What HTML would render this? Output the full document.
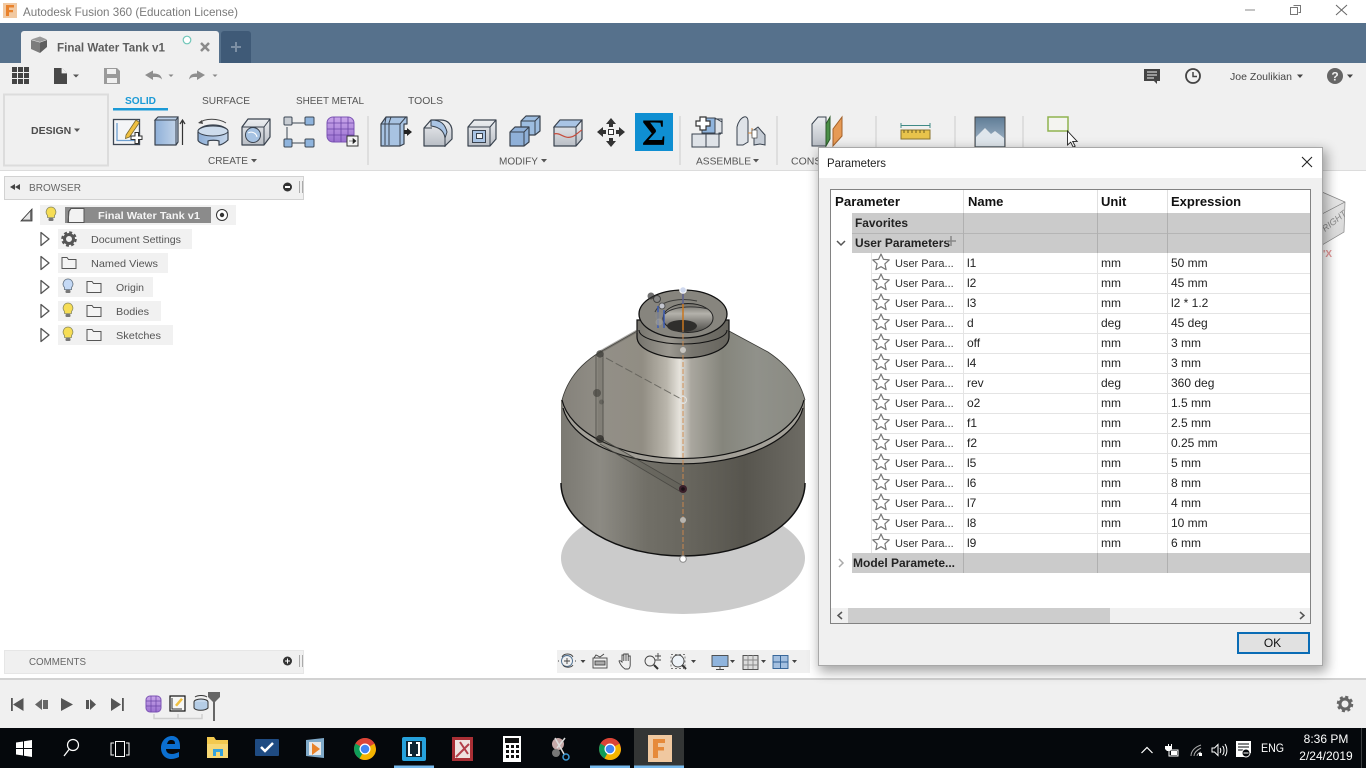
<!DOCTYPE html>
<html><head><meta charset="utf-8"><title>Autodesk Fusion 360</title>
<style>
html,body{margin:0;padding:0;background:#fff;overflow:hidden}
svg{display:block}
text{font-family:"Liberation Sans",Arial,sans-serif;white-space:pre}
.tb{font-size:10.5px;fill:#555}
.h{font-size:13px;font-weight:bold;fill:#111}
.g{font-size:11.5px;font-weight:bold;fill:#222}
.c{font-size:12px;fill:#222}
.u{font-size:11px;fill:#333}
</style></head><body>
<svg width="1366" height="768" viewBox="0 0 1366 768" xmlns="http://www.w3.org/2000/svg">
<defs>
<linearGradient id="bl" x1="0" y1="0" x2="1" y2="0"><stop offset="0" stop-color="#8fb0d8"/><stop offset="1" stop-color="#c5d6ea"/></linearGradient>
<linearGradient id="gy" x1="0" y1="0" x2="0" y2="1"><stop offset="0" stop-color="#eceef1"/><stop offset="1" stop-color="#b9bec5"/></linearGradient>
<linearGradient id="pu" x1="0" y1="0" x2="0" y2="1"><stop offset="0" stop-color="#c9a6ea"/><stop offset="1" stop-color="#9a70d0"/></linearGradient>
<linearGradient id="cone" x1="562" y1="0" x2="805" y2="0" gradientUnits="userSpaceOnUse">
<stop offset="0" stop-color="#85827b"/><stop offset=".18" stop-color="#928f87"/><stop offset=".33" stop-color="#918d83"/><stop offset=".43" stop-color="#b9b5ab"/><stop offset=".485" stop-color="#e6e3dc"/><stop offset=".53" stop-color="#aaa79f"/><stop offset=".66" stop-color="#85857c"/><stop offset=".8" stop-color="#90918a"/><stop offset="1" stop-color="#8a8a82"/></linearGradient>
<linearGradient id="cyl" x1="561" y1="0" x2="805" y2="0" gradientUnits="userSpaceOnUse">
<stop offset="0" stop-color="#7b7972"/><stop offset=".16" stop-color="#8c8a83"/><stop offset=".35" stop-color="#716f67"/><stop offset=".5" stop-color="#69675f"/><stop offset=".75" stop-color="#57554e"/><stop offset="1" stop-color="#6d6b64"/></linearGradient>
<linearGradient id="neck" x1="637" y1="0" x2="729" y2="0" gradientUnits="userSpaceOnUse">
<stop offset="0" stop-color="#75736c"/><stop offset=".35" stop-color="#9b9890"/><stop offset=".6" stop-color="#78766f"/><stop offset="1" stop-color="#66645d"/></linearGradient>
<linearGradient id="hole" x1="0" y1="0" x2="0" y2="1"><stop offset="0" stop-color="#6e6c66"/><stop offset=".35" stop-color="#b4b2ab"/><stop offset=".6" stop-color="#8a8883"/><stop offset="1" stop-color="#4d4c48"/></linearGradient>
<linearGradient id="cube" x1="0" y1="0" x2="1" y2="1"><stop offset="0" stop-color="#f0f0f0"/><stop offset="1" stop-color="#d4d4d4"/></linearGradient>
<linearGradient id="sky" x1="0" y1="0" x2="0" y2="1"><stop offset="0" stop-color="#5f7c96"/><stop offset="1" stop-color="#a9bccd"/></linearGradient>
<filter id="sh" x="-10%" y="-10%" width="120%" height="120%"><feGaussianBlur stdDeviation="6"/></filter>
<g id="star"><path d="M0-8 2.400-2.700 8.200-2.100 3.900 1.800 5.100 7.600 0 4.700-5.100 7.600-3.900 1.800-8.200-2.100-2.400-2.700Z" fill="#fff" stroke="#777" stroke-width="1.200" stroke-linejoin="round"/></g>
<g id="bulb"><path d="M0-7a5 5 0 0 1 3.500 8.400V3.500h-7V1.400A5 5 0 0 1 0-7Z" stroke="#8a8a60" stroke-width=".8" fill="#f6dd55"/><rect x="-2.500" y="4" width="5" height="3" rx="1" fill="#777"/></g>
<g id="folder"><path d="M-7-5.500h5l1.500 2H7V5.500H-7Z" fill="#f4f4f4" stroke="#555" stroke-width="1"/></g>
<path id="tri" d="M-4-6.500 4 0-4 6.500Z" fill="#fff" stroke="#555" stroke-width="1.300" stroke-linejoin="round"/>
</defs>

<!-- title bar -->
<rect width="1366" height="23" fill="#fff"/>
<rect x="3" y="3" width="14" height="15" fill="#f1c9a2"/>
<path d="M6 5h8v2.500H9v2.500h4v2.200H9V16H6Z" fill="#e9822c"/>
<text x="23" y="16" font-size="12" fill="#7a7a7a" textLength="215" lengthAdjust="spacingAndGlyphs">Autodesk Fusion 360 (Education License)</text>
<path d="M1245 10h10" stroke="#888"/>
<path d="M1293.500 5.500h7v7h-2M1290.500 7.500h7v7h-7Z" fill="#fff" stroke="#777"/>
<path d="M1336 5 1347 15M1347 5 1336 15" stroke="#666"/>

<!-- app bar -->
<rect y="23" width="1366" height="40" fill="#56718c"/>
<path d="M21 63V34a3 3 0 0 1 3-3H216a3 3 0 0 1 3 3V63Z" fill="#f0f0f0"/>
<path d="M221 63V34a3 3 0 0 1 3-3H248a3 3 0 0 1 3 3V63Z" fill="#3f5a77"/>
<path d="M31 40l9 2.500v10.500l-9-4Z" fill="#7c7c7c"/>
<path d="M40 42.500l7-2.500v7l-7 6Z" fill="#5e5e5e"/>
<path d="M31 39.500l9-3 7 3-7 2.500Z" fill="#9a9a9a"/>
<text x="57" y="51.500" font-size="12" font-weight="bold" fill="#5c5c5c" textLength="108" lengthAdjust="spacingAndGlyphs">Final Water Tank v1</text>
<circle cx="187" cy="40" r="3.800" fill="#fff" stroke="#6fc6b8" stroke-width="1.200"/>
<path d="M201 43 209 51M209 43 201 51" stroke="#8a8a8a" stroke-width="2.500"/>
<path d="M236 42v10M231 47h10" stroke="#7c8fa4" stroke-width="2"/>

<!-- toolbar -->
<rect y="63" width="1366" height="107" fill="#f0f0f0"/>
<rect y="170" width="1366" height="1" fill="#dcdcdc"/>
<g fill="#444"><rect x="12" y="67" width="5" height="5"/><rect x="18" y="67" width="5" height="5"/><rect x="24" y="67" width="5" height="5"/><rect x="12" y="73" width="5" height="5"/><rect x="18" y="73" width="5" height="5"/><rect x="24" y="73" width="5" height="5"/><rect x="12" y="79" width="5" height="5"/><rect x="18" y="79" width="5" height="5"/><rect x="24" y="79" width="5" height="5"/></g>
<path d="M54 68h8l5 5v11H54Z" fill="#484848"/><path d="M62 68v5h5" fill="#f0f0f0" stroke="#f0f0f0" stroke-width=".8"/>
<path d="M73 74.500h6l-3 3Z" fill="#555"/>
<path d="M104 68h13l3 3v13h-16Z" fill="#9a9a9a"/><rect x="107" y="69" width="9" height="5" fill="#f0f0f0"/><rect x="107" y="78" width="10" height="5" fill="#f0f0f0"/>
<path d="M153 70.500v3c5 0 8 1 9 6-3-3-5-2.500-9-2.500v3l-8-5Z" fill="#8e8e8e"/>
<path d="M168.500 74.500h5l-2.500 2.500Z" fill="#888"/>
<path d="M197 70.500v3c-5 0-7 1-8 6 3-3 4-2.500 8-2.500v3l8-5Z" fill="#8e8e8e"/>
<path d="M212.500 74.500h5l-2.500 2.500Z" fill="#888"/>

<rect x="4" y="94.500" width="104" height="71" fill="#f0f0f0" stroke="#dcdcdc" stroke-width="2"/>
<text x="31" y="134" font-size="10.500" font-weight="bold" fill="#4c4c4c">DESIGN</text>
<path d="M74 128.500h6l-3 3.500Z" fill="#555"/>
<text x="125" y="104" font-size="10.500" font-weight="bold" fill="#1b9ad6" textLength="31" lengthAdjust="spacingAndGlyphs">SOLID</text>
<rect x="113" y="108" width="55" height="2.500" fill="#1b9ad6"/>
<text x="202" y="104" class="tb" textLength="48" lengthAdjust="spacingAndGlyphs">SURFACE</text>
<text x="296" y="104" class="tb" textLength="68" lengthAdjust="spacingAndGlyphs">SHEET METAL</text>
<text x="408" y="104" class="tb" textLength="35" lengthAdjust="spacingAndGlyphs">TOOLS</text>
<g stroke="#dedede" stroke-width="2"><path d="M368 116V165M680 116V165M777 116V165M876 116V148M955 116V148M1023 116V148"/></g>
<text x="208" y="164" class="tb" textLength="40" lengthAdjust="spacingAndGlyphs">CREATE</text><path d="M251 159h6l-3 3.500Z" fill="#555"/>
<text x="499" y="164.500" class="tb" textLength="39" lengthAdjust="spacingAndGlyphs">MODIFY</text><path d="M541 159h6l-3 3.500Z" fill="#555"/>
<text x="696" y="164.500" class="tb" textLength="55" lengthAdjust="spacingAndGlyphs">ASSEMBLE</text><path d="M753 159h6l-3 3.500Z" fill="#555"/>
<text x="791" y="164.500" class="tb">CONSTRUCT</text>

<!-- sketch icon -->
<rect x="113.500" y="119.500" width="26" height="25" fill="#f4f5f7" stroke="#3d4754" stroke-width="1.300"/>
<path d="M117 123v17.500h20" stroke="#6d9fd1" fill="none" stroke-width="1.300"/>
<path d="M126 135 136 120l3.500 2.500-10 14.500-4 1.500Z" fill="#f0c040" stroke="#7a6a30" stroke-width=".8"/>
<path d="M131 136h4v-3.500h3.500v3.500h3.500v3.500h-3.500v4h-3.500v-4h-4Z" fill="#fff" stroke="#333"/>
<!-- extrude -->
<path d="M155 120l3-3h20v25l-2 3h-21Z" fill="url(#bl)" stroke="#39424e" stroke-width="1.200" stroke-linejoin="round"/>
<path d="M158 117l18 0 2 0-2 3H155Z" fill="#bcd0e8" stroke="#39424e"/>
<path d="M176 120v25" stroke="#39424e"/>
<path d="M182.500 145V121m-2.500 3 2.500-4 2.500 4" stroke="#333" fill="none" stroke-width="1.200"/>
<!-- revolve -->
<path d="M198 132c0-4 7-7 15-7s15 3 15 7v8c-3 3-7 5-9 5v-4c-2-1-9-1-11 0v4c-4 0-10-3-10-5Z" fill="url(#bl)" stroke="#39424e" stroke-width="1.200"/>
<ellipse cx="213" cy="131" rx="15" ry="5" fill="#cddcec" stroke="#39424e"/>
<path d="M199 123c6-5 19-5 27 0" stroke="#444" fill="none"/><path d="M202 120l-4 3 5 1" fill="#444"/>
<!-- hole -->
<path d="M242 127l6-8h22v18l-6 8h-22Z" fill="url(#gy)" stroke="#39424e" stroke-width="1.200" stroke-linejoin="round"/>
<path d="M242 127h22v18M264 127l6-8" stroke="#39424e" fill="none"/>
<circle cx="253" cy="135" r="7.500" fill="#a6c2e2" stroke="#39424e"/><path d="M248 133a6 6 0 0 1 9 4" fill="none" stroke="#fff"/>
<!-- pattern -->
<g stroke="#3d4754"><path d="M290 123h15M287 127v14M290 143h15" fill="none"/>
<rect x="284" y="117" width="8" height="8" rx="1" fill="#c8cdd3"/><rect x="305" y="117" width="9" height="8" rx="1" fill="#8fb4dd"/><rect x="284" y="139" width="8" height="8" rx="1" fill="#8fb4dd"/><rect x="305" y="139" width="9" height="8" rx="1" fill="#8fb4dd"/></g>
<!-- purple -->
<rect x="327" y="117" width="27" height="25" rx="6" fill="url(#pu)" stroke="#7d55b5"/>
<g stroke="#6a44a5" stroke-width=".8"><path d="M327 123h27M327 129h27M327 135h27M334 117v25M341 117v25M348 117v25"/></g>
<rect x="347" y="136" width="11" height="10" fill="#f4f4f4" stroke="#333"/><path d="M349 141h4v-2.500l3 2.500-3 2.500V141" fill="#222" stroke="#222" stroke-width=".6"/>
<!-- press pull -->
<path d="M381 124l5-7h21v7l-3 0v20l-4 2h-19Z" fill="#a8c3e2" stroke="#39424e" stroke-width="1.200" stroke-linejoin="round"/>
<path d="M386 117l-1 6v22M391 117l-2 6v22M400 124l6-7M400 124v22M381 124h19" stroke="#39424e" fill="none"/>
<path d="M404 130h3v-2l5 4-5 4v-2h-3Z" fill="#222"/>
<!-- fillet -->
<path d="M424 128l7-8h10c7 0 11 5 11 11v8l-7 7h-21Z" fill="url(#gy)" stroke="#39424e" stroke-width="1.200" stroke-linejoin="round"/>
<path d="M431 120c10 0 14 4 16 12l-2 6c-1-7-6-11-14-12Z" fill="#a9c4e4" stroke="#39424e"/><path d="M445 147v-9M424 128h8" stroke="#39424e" fill="none"/>
<!-- shell -->
<path d="M468 127l6-7h22v19l-6 7h-22Z" fill="url(#gy)" stroke="#39424e" stroke-width="1.200" stroke-linejoin="round"/>
<path d="M468 127h22v19M490 127l6-7" stroke="#39424e" fill="none"/>
<rect x="472.500" y="130.500" width="13" height="12" fill="#a9c4e4" stroke="#39424e"/><rect x="476.500" y="133.500" width="6" height="5" fill="#eef1f4" stroke="#39424e"/>
<!-- combine -->
<path d="M521 121l5-5h14v15l-5 4h-14Z" fill="#9dbde0" stroke="#39424e" stroke-width="1.200" stroke-linejoin="round"/><path d="M521 121h14v14M535 121l5-5" stroke="#39424e" fill="none"/>
<path d="M510 132l5-5h14v15l-5 4h-14Z" fill="#8fb0d8" stroke="#39424e" stroke-width="1.200" stroke-linejoin="round"/><path d="M510 132h14v14M524 132l5-5" stroke="#39424e" fill="none"/>
<!-- replace face -->
<path d="M554 127l6-7h22v19l-6 7h-22Z" fill="url(#gy)" stroke="#39424e" stroke-width="1.200" stroke-linejoin="round"/>
<path d="M554 127l6-7h22l-6 7Z" fill="#a9c4e4" stroke="#39424e"/><path d="M554 127h22v19M576 127l6-7" stroke="#39424e" fill="none"/>
<path d="M554 134c6-2 10 5 17 3 5-1 7-5 11-7" stroke="#c64d3d" fill="none" stroke-width="1.200"/>
<!-- move -->
<g fill="#333"><path d="M611 118l5 6h-3v3h-4v-3h-3ZM611 147l5-6h-3v-3h-4v3h-3ZM597 132l6-5v3h3v4h-3v3ZM625 132l-6-5v3h-3v4h3v3Z"/></g><rect x="608.500" y="129.500" width="5" height="5" fill="#fff" stroke="#333"/>
<!-- sigma -->
<rect x="635" y="113" width="38" height="38" fill="#0f8fd2"/>
<text x="654" y="145" text-anchor="middle" font-size="37" font-weight="bold" fill="#000" style="font-family:'Liberation Serif',serif">Σ</text>
<!-- assemble -->
<path d="M692 134h15v-15h8l7 0v14h-3v14H692Z" fill="#dfe3e8" stroke="#39424e"/>
<path d="M702 118h13v15h-13Z" fill="#8fb4dd" stroke="#39424e"/><path d="M692 134h14v13M706 134h15M715 118l7 4v12" fill="none" stroke="#39424e"/>
<path d="M696 121h4v-4h6v4h4v5h-4v4h-6v-4h-4Z" fill="#fff" stroke="#333" stroke-width="1.200"/>
<!-- joint -->
<path d="M737 145v-18c1-5 4-9 7-10s4 2 4 4v21l-5 3Z" fill="#dfe3e8" stroke="#39424e"/>
<path d="M754 145v-15l4-3 7 8v10l-5-1Z" fill="#c6cdd6" stroke="#39424e"/>
<path d="M748 133h6M752 128v8" stroke="#d1873d"/><rect x="752" y="130" width="5" height="8" fill="#fff" stroke="#444" stroke-width=".7"/>
<!-- construct -->
<path d="M812 124l6-7h8v29h-14Z" fill="url(#gy)" stroke="#39424e"/>
<path d="M826 146V124l4-7v22Z" fill="#4a8f47" stroke="#2c5a2a"/>
<path d="M833 146v-17l9-12v19Z" fill="#e69a55" stroke="#a5622a"/>
<!-- ruler -->
<rect x="901" y="130" width="29" height="9" fill="#e8c34b" stroke="#8a7430"/><path d="M904 130v3M908 130v3M912 130v3M916 130v3M920 130v3M924 130v3" stroke="#6d5c22"/><path d="M901 125.500h29M901 123v5M930 123v5" stroke="#3f8a86" fill="none"/>
<!-- image -->
<rect x="975" y="117" width="30" height="30" fill="url(#sky)" stroke="#444"/><path d="M976 137l9-9 6 6 4-3 9 7v8H976Z" fill="#dfe6ec"/>
<!-- green rect + cursor -->
<rect x="1048" y="117" width="20" height="14" fill="#f4f4f0" stroke="#8fb34f" stroke-width="1.500"/>
<path d="M1067.500 131v14l3.200-2.800 2.500 5 2-1-2.500-4.800h4.500Z" fill="#fff" stroke="#222" stroke-width=".9"/>
<!-- top right -->
<path d="M1144 69h16v12h-3v3l-3-3h-10Z" fill="#444"/><path d="M1147 72h10M1147 75h10M1147 78h7" stroke="#f0f0f0"/>
<circle cx="1193" cy="76" r="7" fill="none" stroke="#444" stroke-width="1.800"/><path d="M1193 72v4.500h4" stroke="#444" fill="none" stroke-width="1.500"/>
<text x="1230" y="80" font-size="10.500" fill="#444" textLength="62" lengthAdjust="spacingAndGlyphs">Joe Zoulikian</text>
<path d="M1297 74.500h6l-3 3.500Z" fill="#444"/>
<circle cx="1335" cy="76" r="8" fill="#666"/><text x="1335" y="80.500" text-anchor="middle" font-size="12" font-weight="bold" fill="#f0f0f0">?</text>
<path d="M1347 74.500h6l-3 3.500Z" fill="#444"/>

<!-- browser -->
<rect x="4.500" y="176.500" width="299" height="23" fill="#f0f0f0" stroke="#d2d2d2"/>
<path d="M15 184v6l-5-3ZM20 184v6l-5-3Z" fill="#444"/>
<text x="29" y="191" font-size="10.500" fill="#666" textLength="52" lengthAdjust="spacingAndGlyphs">BROWSER</text>
<circle cx="287.500" cy="187" r="4.500" fill="#333"/><rect x="285" y="186" width="5" height="2" fill="#fff"/>
<path d="M299.500 181v12M302.500 181v12" stroke="#aaa"/>
<path d="M32 209v12H21Z" fill="#777" stroke="#333" stroke-width=".8"/><path d="M30 212v7.500h-7" fill="#e6e6e6"/>
<rect x="40" y="205" width="196" height="20" fill="#f1f1f1"/>
<rect x="65" y="207" width="146" height="16" fill="#8b8b8b"/>
<use href="#bulb" x="51" y="214"/>
<path d="M69 211.500l2-3h13v14H68Z" fill="#f2f2f2" stroke="#555"/><path d="M68.500 222v-10.500l2.500-3" stroke="#555" fill="none"/>
<text x="98" y="219" font-size="10.500" font-weight="bold" fill="#f4f4f4" textLength="102" lengthAdjust="spacingAndGlyphs">Final Water Tank v1</text>
<circle cx="222" cy="215" r="5.500" fill="#fff" stroke="#333"/><circle cx="222" cy="215" r="2.200" fill="#333"/>
<rect x="58" y="229" width="134" height="20" fill="#f1f1f1"/>
<rect x="58" y="253" width="110" height="20" fill="#f1f1f1"/>
<rect x="58" y="277" width="95" height="20" fill="#f1f1f1"/>
<rect x="58" y="301" width="103" height="20" fill="#f1f1f1"/>
<rect x="58" y="325" width="115" height="20" fill="#f1f1f1"/>
<use href="#tri" x="45" y="239"/><use href="#tri" x="45" y="263"/><use href="#tri" x="45" y="287"/><use href="#tri" x="45" y="311"/><use href="#tri" x="45" y="335"/>
<circle cx="69" cy="239" r="4.500" fill="none" stroke="#555" stroke-width="3"/><circle cx="69" cy="239" r="6.800" fill="none" stroke="#555" stroke-width="2" stroke-dasharray="3 2.340"/>
<use href="#folder" x="69" y="263"/>
<use href="#bulb" x="68" y="286"/><path d="M68 279a5 5 0 0 1 3.500 8.400v2.100h-7v-2.100A5 5 0 0 1 68 279Z" fill="#c4d9f5" stroke="#6a7a90" stroke-width=".8"/>
<use href="#folder" x="94" y="287"/>
<use href="#bulb" x="68" y="310"/><use href="#folder" x="94" y="311"/>
<use href="#bulb" x="68" y="334"/><use href="#folder" x="94" y="335"/>
<g font-size="10.500" fill="#555">
<text x="91" y="243" textLength="90" lengthAdjust="spacingAndGlyphs">Document Settings</text>
<text x="91" y="267" textLength="67" lengthAdjust="spacingAndGlyphs">Named Views</text>
<text x="116" y="291" textLength="28" lengthAdjust="spacingAndGlyphs">Origin</text>
<text x="116" y="315" textLength="33" lengthAdjust="spacingAndGlyphs">Bodies</text>
<text x="116" y="339" textLength="45" lengthAdjust="spacingAndGlyphs">Sketches</text></g>

<!-- comments -->
<rect x="4.500" y="650.500" width="299" height="23" fill="#f0f0f0" stroke="#e6e6e6"/>
<text x="29" y="665" font-size="10.500" fill="#666" textLength="57" lengthAdjust="spacingAndGlyphs">COMMENTS</text>
<circle cx="287.500" cy="661" r="4.500" fill="#333"/><path d="M285 661h5M287.500 658.500v5" stroke="#fff"/>
<path d="M299.500 655v12M302.500 655v12" stroke="#aaa"/>

<!-- model -->
<ellipse cx="683" cy="558" rx="122" ry="56" fill="#cbcbcb"/>
<path d="M561 400V483A122 73 0 0 0 805 483V400Z" fill="url(#cyl)"/>
<path d="M561 483A122 73 0 0 0 805 483" fill="none" stroke="#111" stroke-width="1.500"/>
<path d="M562 400Q570 370 600 352L637 331H729L768 352Q798 372 805 400A122 67 0 0 1 562 400Z" fill="url(#cone)"/>
<path d="M600 352L637 331M729 331L768 352Q798 372 805 400M562 400Q570 370 600 352" fill="none" stroke="#3a3a36" stroke-width=".8"/>
<path d="M563 408A121 64 0 0 0 803 408L804 400A122 67 0 0 1 562 400Z" fill="#a3a098"/>
<path d="M562 400A122 67 0 0 0 804 400" fill="none" stroke="#111" stroke-width="1.200"/>
<path d="M563 408A121 64 0 0 0 803 408" fill="none" stroke="#111" stroke-width="1.200"/>
<!-- neck -->
<path d="M637 320V337A46 21 0 0 0 729 337V320Z" fill="url(#neck)" stroke="#111" stroke-width="1.200"/>
<path d="M639 330A44 14 0 0 0 727 330" fill="none" stroke="#111" stroke-width="1"/>
<ellipse cx="683" cy="314" rx="44" ry="24" fill="#87857e" stroke="#111" stroke-width="1.300"/>
<ellipse cx="688" cy="318" rx="25" ry="14.500" fill="url(#hole)" stroke="#222"/>
<ellipse cx="682" cy="326" rx="15" ry="6" fill="#2f2e2c"/>
<path d="M665 314c6-7 26-9 43-5" fill="none" stroke="#333"/>
<path d="M655 312c6-13 28-14 42-11" fill="none" stroke="#2a2a2a" opacity=".8"/>
<!-- sketch overlay -->
<g fill="none">
<path d="M683 292V558" stroke="#d08a4a" stroke-width="1" stroke-dasharray="5 2" opacity=".9"/>
<path d="M683 292V330" stroke="#c9761f" stroke-width="1.500"/>
<path d="M683 290v14" stroke="#3a5bb5" stroke-width="1.200"/>
<path d="M600 352L637 331" stroke="#5c5a54" stroke-width="3" opacity=".5"/>
<path d="M596 355V440M603 355V440" stroke="#45443f" stroke-width=".9" opacity=".8"/>
<path d="M600 358V440" stroke="#55534d" stroke-width="5" opacity=".25"/>
<path d="M600 438L683 486M600 444L681 492" stroke="#45443f" stroke-width=".9" opacity=".85"/>
<path d="M600 441L682 489" stroke="#55534d" stroke-width="5" opacity=".25"/>
<path d="M606 358L683 400" stroke="#5d5b55" stroke-width="1" stroke-dasharray="8 3" opacity=".8"/>
<path d="M658 306V328" stroke="#3a5bb5" stroke-width="1.500"/>
<path d="M664 310V328" stroke="#3a5bb5" stroke-width="1.500"/>
</g>
<g>
<circle cx="600" cy="354" r="3.800" fill="#3f3e39" opacity=".8"/>
<circle cx="597" cy="393" r="4" fill="#3f3e39" opacity=".6"/>
<circle cx="601.500" cy="402" r="2.500" fill="#3f3e39" opacity=".4"/>
<circle cx="600" cy="439" r="4" fill="#2f2e2a" opacity=".8"/>
<circle cx="651" cy="296" r="3.500" fill="#333" opacity=".7"/>
<circle cx="657" cy="299" r="3.500" fill="#888" stroke="#333" opacity=".8"/>
<circle cx="662" cy="306" r="3" fill="#c4c6cf" stroke="#555"/>
<circle cx="659" cy="316" r="4" fill="#888" opacity=".8"/>
<circle cx="659" cy="322" r="3.500" fill="#9c9c9c" opacity=".7"/>
<circle cx="683" cy="290" r="3.300" fill="#cfd8ee" stroke="#fff"/>
<circle cx="683" cy="350" r="3" fill="#c7c5c0"/>
<circle cx="683" cy="400" r="3.500" fill="none" stroke="#e5e3de"/>
<circle cx="683" cy="489" r="4" fill="#3a1f2a"/><circle cx="683" cy="489" r="1.800" fill="#1b0f15"/>
<circle cx="683" cy="520" r="3" fill="#b8b5af"/>
<circle cx="683" cy="559" r="3.300" fill="#fff" stroke="#888"/>
</g>

<!-- view cube -->
<path d="M1322 192l23 10-1 30-22 13Z" fill="url(#cube)" stroke="#888" stroke-width=".7"/>
<path d="M1322 214l23-12" stroke="#777" stroke-width=".7"/>
<text transform="translate(1325 232) rotate(-38)" font-size="9" font-style="italic" fill="#888">RIGHT</text>
<text x="1323" y="257" font-size="10" font-weight="bold" fill="#e89a9a">'X</text>

<!-- nav bar -->
<rect x="557" y="650" width="253" height="23" fill="#f0f0f0"/>
<g fill="none" stroke="#444" stroke-width=".9">
<circle cx="567" cy="661" r="5.500" stroke="#4a6d90"/><path d="M562 657c2-4 9-4 11 0M573 665c-2 3-8 3-10 0M559 661h-1M576 661h-1" stroke="#444"/><path d="M567 658v6M564 661h6" stroke="#444"/>
<rect x="593" y="658" width="14" height="10"/><rect x="595" y="661" width="10" height="4" fill="#aaa"/><path d="M594 658l2-3 4 2 4-3"/>
<path d="M625 669c-3-2-5-5-6-8 1-1 2 0 3 1v-7h1.800v6-7h2.200v7-7h2.200v7-5h2v9c0 2-1 4-2 4Z"/>
<circle cx="650" cy="661" r="5"/><path d="M654 665l4 4" stroke-width="2" stroke="#333"/><path d="M655 656h6M658 653v6M655 660h6"/>
<circle cx="678" cy="661" r="6" fill="#eef3f8"/><path d="M682 665l4 4" stroke-width="2" stroke="#333"/><rect x="671" y="654.500" width="14" height="14" stroke-dasharray="2 2" stroke="#777"/>
<rect x="712" y="655.500" width="16" height="11" fill="#8fb4dd"/><path d="M720 666.500v2.500M716 669.500h8"/>
<rect x="743" y="655.500" width="15" height="14" fill="#ddd"/><path d="M743 660h15M743 665h15M748 655v14M753 655v14" stroke="#888"/>
<rect x="773" y="655.500" width="15" height="13" fill="#a4c0e0" stroke="#2b5d92"/><path d="M773 662h15M780.500 655.500v13" stroke="#2b5d92"/>
</g>
<g fill="#444"><path d="M580.500 660h5l-2.500 3ZM691 660h5l-2.500 3ZM730 660h5l-2.500 3ZM761 660h5l-2.500 3ZM792 660h5l-2.500 3Z"/></g>

<!-- timeline -->
<rect y="678" width="1366" height="2" fill="#d2d2d2"/>
<rect y="680" width="1366" height="48" fill="#f0f0f0"/>
<g fill="#555">
<path d="M11 698h1.800v13H11ZM23.500 698v13L13 704.500Z"/>
<path d="M35 704.500 42 699v11ZM43 700v9h5v-9Z" fill="#666"/>
<path d="M61 698 73 704.500 61 711Z"/>
<path d="M96 704.500 90 699v11ZM89 700v9h-3v-9Z"/>
<path d="M111 698v13l10-6.500ZM122 698h1.800v13H122Z"/>
</g>
<rect x="146" y="696" width="15" height="16" rx="4" fill="url(#pu)" stroke="#7d55b5"/><path d="M146 701h15M146 706h15M151 696v16M156 696v16" stroke="#6a44a5" stroke-width=".7"/>
<rect x="170" y="696" width="15" height="15" fill="#f7f7f5" stroke="#111" stroke-width="1.200"/><path d="M172 698v11h10" stroke="#333" fill="none"/><path d="M175 705l6-7 2 1.500-6 7Z" fill="#f0c040"/>
<ellipse cx="201" cy="702" rx="7" ry="3" fill="#c5d8ec" stroke="#333"/><path d="M194 702v6c2 3 11 3 14 0v-6" fill="#b5cde6" stroke="#333"/><path d="M195 697c3-2 9-2 12 0" stroke="#333" fill="none"/>
<path d="M154 714v4.500h48V714M178 714v4" stroke="#cfcfcf" fill="none" stroke-width="1.500"/>
<path d="M208 692h12v5l-5 5h-2l-5-5Z" fill="#666"/><rect x="213" y="700" width="2" height="21" fill="#666"/>
<circle cx="1345" cy="704" r="5" fill="none" stroke="#666" stroke-width="3"/><circle cx="1345" cy="704" r="7" fill="none" stroke="#666" stroke-width="2.500" stroke-dasharray="3 2.500"/>

<!-- dialog -->
<rect x="819" y="150" width="508" height="522" fill="#000" opacity=".35" filter="url(#sh)"/>
<rect x="818.500" y="147.500" width="504" height="518" fill="#f0f0f0" stroke="#a8a8a8"/>
<rect x="819" y="148" width="503" height="30" fill="#fff"/>
<text x="827" y="167" font-size="12" fill="#222" textLength="59" lengthAdjust="spacingAndGlyphs">Parameters</text>
<path d="M1302 157 1312 167M1312 157 1302 167" stroke="#222" stroke-width="1.100"/>
<rect x="830.500" y="189.500" width="480" height="434" fill="#fff" stroke="#828282"/>
<g stroke="#e0e0e0"><path d="M963.500 190V213M1097.500 190V213M1167.500 190V213"/></g>
<text x="835" y="206" class="h" textLength="65" lengthAdjust="spacingAndGlyphs">Parameter</text>
<text x="968" y="206" class="h">Name</text>
<text x="1101" y="206" class="h">Unit</text>
<text x="1171" y="206" class="h">Expression</text>
<rect x="852" y="213" width="458" height="40" fill="#cbcbcb"/>
<rect x="852" y="553" width="458" height="20" fill="#cbcbcb"/>
<path d="M852 233.500H1310" stroke="#b5b5b5"/>
<g stroke="#b0b0b0"><path d="M963.500 213V253M1097.500 213V253M1167.500 213V253M963.500 553V573M1097.500 553V573M1167.500 553V573"/></g>
<text x="855" y="227" class="g" textLength="53" lengthAdjust="spacingAndGlyphs">Favorites</text>
<text x="855" y="247" class="g" textLength="95" lengthAdjust="spacingAndGlyphs">User Parameters</text>
<text x="853" y="567" class="g" textLength="102" lengthAdjust="spacingAndGlyphs">Model Paramete...</text>
<path d="M837 241l4 4 4-4" fill="none" stroke="#555" stroke-width="1.500"/>
<path d="M839 559l4 4-4 4" fill="none" stroke="#aaa" stroke-width="1.500"/>
<path d="M951 236v10M946 241h10" stroke="#888" stroke-width="1.500"/>
<g stroke="#e4e4e4"><path d="M871.500 253V553M963.500 253V553M1097.500 253V553M1167.500 253V553"/>
<path d="M872 273.500H1310M872 293.500H1310M872 313.500H1310M872 333.500H1310M872 353.500H1310M872 373.500H1310M872 393.500H1310M872 413.500H1310M872 433.500H1310M872 453.500H1310M872 473.500H1310M872 493.500H1310M872 513.500H1310M872 533.500H1310"/></g>
<use href="#star" x="881" y="262"/><use href="#star" x="881" y="282"/><use href="#star" x="881" y="302"/><use href="#star" x="881" y="322"/><use href="#star" x="881" y="342"/><use href="#star" x="881" y="362"/><use href="#star" x="881" y="382"/><use href="#star" x="881" y="402"/><use href="#star" x="881" y="422"/><use href="#star" x="881" y="442"/><use href="#star" x="881" y="462"/><use href="#star" x="881" y="482"/><use href="#star" x="881" y="502"/><use href="#star" x="881" y="522"/><use href="#star" x="881" y="542"/>
<text x="895" y="267" class="u">User Para...</text><text x="895" y="287" class="u">User Para...</text><text x="895" y="307" class="u">User Para...</text><text x="895" y="327" class="u">User Para...</text><text x="895" y="347" class="u">User Para...</text><text x="895" y="367" class="u">User Para...</text><text x="895" y="387" class="u">User Para...</text><text x="895" y="407" class="u">User Para...</text><text x="895" y="427" class="u">User Para...</text><text x="895" y="447" class="u">User Para...</text><text x="895" y="467" class="u">User Para...</text><text x="895" y="487" class="u">User Para...</text><text x="895" y="507" class="u">User Para...</text><text x="895" y="527" class="u">User Para...</text><text x="895" y="547" class="u">User Para...</text>
<text x="967" y="267" class="c">l1</text><text x="1101" y="267" class="c">mm</text><text x="1171" y="267" class="c">50 mm</text>
<text x="967" y="287" class="c">l2</text><text x="1101" y="287" class="c">mm</text><text x="1171" y="287" class="c">45 mm</text>
<text x="967" y="307" class="c">l3</text><text x="1101" y="307" class="c">mm</text><text x="1171" y="307" class="c">l2 * 1.2</text>
<text x="967" y="327" class="c">d</text><text x="1101" y="327" class="c">deg</text><text x="1171" y="327" class="c">45 deg</text>
<text x="967" y="347" class="c">off</text><text x="1101" y="347" class="c">mm</text><text x="1171" y="347" class="c">3 mm</text>
<text x="967" y="367" class="c">l4</text><text x="1101" y="367" class="c">mm</text><text x="1171" y="367" class="c">3 mm</text>
<text x="967" y="387" class="c">rev</text><text x="1101" y="387" class="c">deg</text><text x="1171" y="387" class="c">360 deg</text>
<text x="967" y="407" class="c">o2</text><text x="1101" y="407" class="c">mm</text><text x="1171" y="407" class="c">1.5 mm</text>
<text x="967" y="427" class="c">f1</text><text x="1101" y="427" class="c">mm</text><text x="1171" y="427" class="c">2.5 mm</text>
<text x="967" y="447" class="c">f2</text><text x="1101" y="447" class="c">mm</text><text x="1171" y="447" class="c">0.25 mm</text>
<text x="967" y="467" class="c">l5</text><text x="1101" y="467" class="c">mm</text><text x="1171" y="467" class="c">5 mm</text>
<text x="967" y="487" class="c">l6</text><text x="1101" y="487" class="c">mm</text><text x="1171" y="487" class="c">8 mm</text>
<text x="967" y="507" class="c">l7</text><text x="1101" y="507" class="c">mm</text><text x="1171" y="507" class="c">4 mm</text>
<text x="967" y="527" class="c">l8</text><text x="1101" y="527" class="c">mm</text><text x="1171" y="527" class="c">10 mm</text>
<text x="967" y="547" class="c">l9</text><text x="1101" y="547" class="c">mm</text><text x="1171" y="547" class="c">6 mm</text>
<rect x="831" y="608" width="479" height="15" fill="#f0f0f0"/>
<rect x="848" y="608" width="262" height="15" fill="#cdcdcd"/>
<path d="M842 612l-4 3.500 4 3.500M1300 612l4 3.500-4 3.500" fill="none" stroke="#555" stroke-width="1.500"/>
<rect x="1238" y="633" width="71" height="20" fill="#e1e1e1" stroke="#0a6cb5" stroke-width="2"/>
<text x="1272.500" y="647" text-anchor="middle" font-size="12" fill="#111">OK</text>

<!-- taskbar -->
<rect y="728" width="1366" height="40" fill="#05080c"/>
<rect x="634" y="728" width="50" height="40" fill="#333535"/>
<rect x="394" y="765.500" width="40" height="2.500" fill="#76b9ed"/>
<rect x="590" y="765.500" width="40" height="2.500" fill="#76b9ed"/>
<rect x="634" y="765.500" width="50" height="2.500" fill="#76b9ed"/>
<path d="M16 742.500l7-1v6.500h-7ZM24 741.300l8-1.300v8h-8ZM16 749h7v6.500l-7-1ZM24 749h8v8l-8-1.300Z" fill="#fff"/>
<circle cx="73" cy="745" r="5.500" fill="none" stroke="#fff" stroke-width="1.200"/><path d="M69 749.500 64 756" stroke="#fff" stroke-width="1.300"/>
<path d="M114 743h-3v12h3M126 743h3v12h-3" fill="none" stroke="#fff" stroke-width="1"/><rect x="115.500" y="741.500" width="9" height="15" fill="none" stroke="#fff"/>
<path d="M161 748c0-7 5-12 11-12 5 0 8 4 8 10v3h-14c0 3 2 5 6 5 2 0 5-1 7-2v5c-2 1-5 2-8 2-6 0-10-5-10-11Zm6-4h8c0-3-1-4-4-4-2 0-3 1-4 4Z" fill="#0b6fd1"/>
<path d="M207 737h7l2 3h12v18h-21Z" fill="#f3c94f"/><rect x="207" y="744" width="21" height="14" fill="#f7d875"/><rect x="213" y="749" width="10" height="7" fill="#36a3dd"/><rect x="216" y="752" width="4" height="6" fill="#f7d875"/>
<rect x="255" y="739" width="24" height="17" rx="1" fill="#1f4b82"/><path d="M261 747l4 4 8-8" stroke="#fff" stroke-width="2.500" fill="none"/>
<path d="M306 740l18-2v20l-18-2Z" fill="#7fa9c9"/><path d="M309 742h12v13h-12Z" fill="#e8e8e8"/><path d="M312 743l8 6-8 6Z" fill="#e8822a"/>
<g transform="translate(365 749)"><circle r="11" fill="#db4437"/><path d="M0 0-9.500-5.500A11 11 0 0 0-5.500 9.500L0 11Z" fill="#0f9d58"/><path d="M0 0-5.500 9.500A11 11 0 0 0 11 0L9.500-5.500Z" fill="#f4b400"/><path d="M-9.500 -5.500A11 11 0 0 1 9.500-5.500L0 0Z" fill="#db4437"/><circle r="5.500" fill="#fff"/><circle r="4.300" fill="#4285f4"/></g>
<rect x="402" y="737" width="24" height="24" rx="2" fill="#26a1dc"/><rect x="406" y="741" width="16" height="16" fill="#0d2433"/><path d="M412 743h-3v12h3M416 743h3v12h-3" stroke="#fff" stroke-width="2" fill="none"/>
<rect x="452" y="737" width="21" height="24" fill="#a92f35"/><rect x="455" y="740" width="15" height="18" fill="#efe3e0"/><path d="M456 757l13-13M460 742l8 12" stroke="#b3404a" stroke-width="2"/>
<rect x="503" y="736" width="18" height="26" fill="#fff"/><rect x="505" y="738" width="14" height="5" fill="#111"/><g fill="#111"><rect x="506" y="745" width="3" height="3"/><rect x="511" y="745" width="3" height="3"/><rect x="516" y="745" width="3" height="3"/><rect x="506" y="750" width="3" height="3"/><rect x="511" y="750" width="3" height="3"/><rect x="516" y="750" width="3" height="3"/><rect x="506" y="755" width="3" height="3"/><rect x="511" y="755" width="3" height="3"/><rect x="516" y="755" width="3" height="3"/></g>
<circle cx="558" cy="744" r="6" fill="#e9c5c5" opacity=".85"/><path d="M555 738l9 16M565 738l-8 10" stroke="#ddd" stroke-width="1.500"/><circle cx="566" cy="757" r="3" fill="none" stroke="#3d9bd6" stroke-width="1.500"/><circle cx="556" cy="753" r="4" fill="#777"/>
<g transform="translate(610 749)"><circle r="11" fill="#db4437"/><path d="M0 0-9.500-5.500A11 11 0 0 0-5.500 9.500L0 11Z" fill="#0f9d58"/><path d="M0 0-5.500 9.500A11 11 0 0 0 11 0L9.500-5.500Z" fill="#f4b400"/><path d="M-9.500-5.500A11 11 0 0 1 9.500-5.500L0 0Z" fill="#db4437"/><circle r="5.500" fill="#fff"/><circle r="4.300" fill="#4285f4"/></g>
<rect x="648" y="735" width="24" height="27" fill="#f0c8a0"/><path d="M653 739h12v4h-7v4h6v3.500h-6V758h-5Z" fill="#e68a3a"/>
<!-- tray -->
<path d="M1141.500 753l5.500-5.500 5.500 5.500" fill="none" stroke="#fff" stroke-width="1.200"/>
<path d="M1165 746h3v-2h1v2h2v-2h1v2h0v3l-2 2h-3l-2-2Z" fill="#fff"/><rect x="1169" y="750" width="9" height="6" fill="none" stroke="#fff"/><rect x="1171" y="751" width="6" height="4" fill="#fff"/>
<path d="M1191 756c0-5 4-9 10-11M1194 756c0-3 3-6 7-8M1197 756c0-2 2-3 4-4" fill="none" stroke="#aaa" stroke-width="1"/><rect x="1199" y="753" width="3" height="3" fill="#fff"/>
<path d="M1212 748h2.500l3.500-3.500v11l-3.500-3.500H1212Z" fill="none" stroke="#fff"/><path d="M1220 748c1 1 1 4 0 5M1222.500 746c2 2 2 7 0 9M1225 744c2.500 4 2.500 9 0 12" fill="none" stroke="#fff"/>
<path d="M1236 741h15v12h-5v4h-10Z" fill="#fff"/><path d="M1238 744h11M1238 747h11M1238 750h7" stroke="#05080c"/><circle cx="1246" cy="753" r="4" fill="#05080c" stroke="#fff"/><path d="M1243.500 753h5" stroke="#fff"/>
<text x="1261" y="752" font-size="11.500" fill="#fff" textLength="23" lengthAdjust="spacingAndGlyphs">ENG</text>
<text x="1326" y="743" text-anchor="middle" font-size="12" fill="#fff">8:36 PM</text>
<text x="1326" y="760" text-anchor="middle" font-size="12" fill="#fff">2/24/2019</text>
<rect x="1361" y="728" width="1" height="40" fill="#3a3d40"/>
</svg>
</body></html>
